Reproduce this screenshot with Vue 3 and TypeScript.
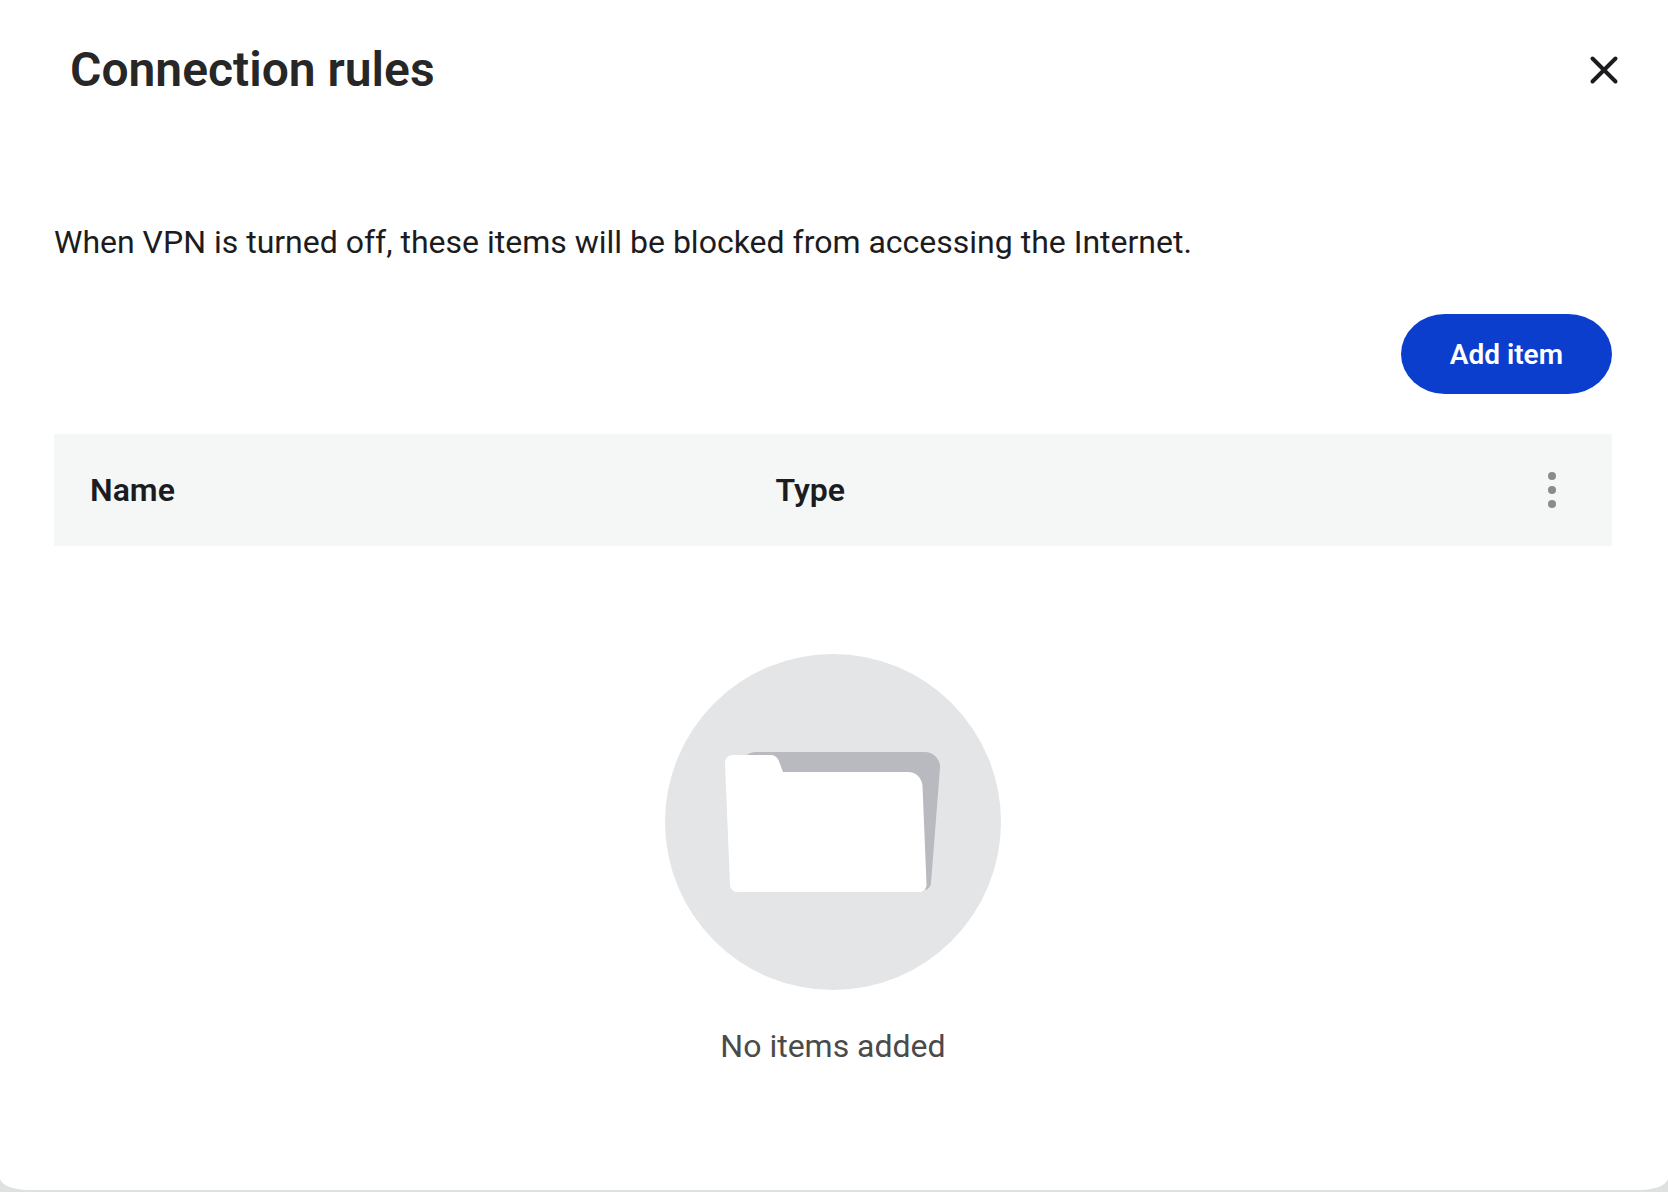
<script setup lang="ts">
import { ref } from 'vue'

interface RuleItem {
  name: string
  type: string
}

const items = ref<RuleItem[]>([])
</script>

<template>
  <div class="backdrop">
    <main class="dialog">
      <header class="header">
        <h1 class="title">Connection rules</h1>
        <button class="icon-button" type="button" aria-label="Close">
          <svg width="32" height="32" viewBox="0 0 32 32" fill="none" stroke="#1c1c20" stroke-width="4" stroke-linecap="round">
            <path d="M4.500 4.500 27.500 27.500M27.500 4.500 4.500 27.500" />
          </svg>
        </button>
      </header>

      <section class="content">
        <p class="description">When VPN is turned off, these items will be blocked from accessing the Internet.</p>

        <div class="actions">
          <button class="add-button" type="button">Add item</button>
        </div>

        <table class="rules">
          <thead>
            <tr>
              <th class="col-name" scope="col">Name</th>
              <th scope="col">Type</th>
              <th class="col-menu" scope="col">
                <button class="icon-button" type="button" aria-label="More options">
                  <svg width="40" height="40" viewBox="0 0 40 40" fill="#8a8b8c">
                    <circle cx="20" cy="6" r="4" />
                    <circle cx="20" cy="20" r="4" />
                    <circle cx="20" cy="34" r="4" />
                  </svg>
                </button>
              </th>
            </tr>
          </thead>
          <tbody>
            <tr v-for="item in items" :key="item.name">
              <td>{{ item.name }}</td>
              <td>{{ item.type }}</td>
              <td></td>
            </tr>
          </tbody>
        </table>

        <div v-if="items.length === 0" class="empty">
          <svg class="empty-art" width="336" height="336" viewBox="0 0 336 336" aria-hidden="true">
            <circle cx="168" cy="168" r="168" fill="#e4e5e7" />
            <path
              fill="#b9bac0"
              d="M91 98H260C268.500 98 275.500 105 275 114L266 229C265.600 233 263 236 259 236H100C96 236 93 233 92.500 229L76 114C75.500 105 82 98 91 98Z"
            />
            <path
              fill="#fff"
              d="M68 101H106C109.500 101 112 103 113.500 106L118 118H243C251 118 257 124 257.500 132L261.500 230C261.700 234.500 258.500 238 254 238H72.500C68.500 238 65.200 235 65 231L60 109C59.800 104.500 63.500 101 68 101Z"
            />
          </svg>
          <p class="empty-text">No items added</p>
        </div>
      </section>
    </main>
  </div>
</template>

<style>
body {
  margin: 0;
}
</style>

<style scoped>
.backdrop {
  display: flex;
  box-sizing: border-box;
  min-height: 100vh;
  background: #dfe0e0;
  font-family: Roboto, "Liberation Sans", sans-serif;
  color: #1c1c20;
}

.dialog {
  flex: 1;
  box-sizing: border-box;
  margin-bottom: 2px;
  padding-bottom: 40px;
  background: #fff;
  border-radius: 0 0 28px 28px / 0 0 12px 12px;
}

.header {
  display: flex;
  align-items: center;
  justify-content: space-between;
  height: 140px;
  padding: 0 48px 0 70px;
}

.title {
  margin: 0;
  font-size: 48px;
  line-height: 56px;
  font-weight: 600;
  color: #272727;
}

.icon-button {
  display: inline-flex;
  padding: 0;
  border: 0;
  background: none;
  cursor: pointer;
}

.content {
  padding: 80px 56px 0 54px;
}

.description {
  margin: 0;
  font-size: 32px;
  line-height: 44px;
}

.actions {
  display: flex;
  justify-content: flex-end;
  padding: 50px 0 40px;
}

.add-button {
  height: 80px;
  padding: 2px 49px 0;
  border: 0;
  border-radius: 44px / 40px;
  background: #0b3ecc;
  color: #fff;
  font-family: inherit;
  font-size: 28px;
  line-height: 40px;
  font-weight: 600;
  cursor: pointer;
}

.rules {
  width: 100%;
  table-layout: fixed;
  border-collapse: collapse;
}

.rules th {
  box-sizing: border-box;
  height: 112px;
  padding: 0 36px;
  background: #f5f7f7;
  font-size: 32px;
  line-height: 44px;
  font-weight: 600;
  text-align: left;
  vertical-align: middle;
}

.rules td {
  padding: 24px 36px;
  font-size: 32px;
  line-height: 44px;
}

.rules .col-name {
  width: 44%;
}

.rules .col-menu {
  width: 120px;
  padding: 0 40px;
}

.rules .icon-button {
  display: flex;
}

.empty {
  display: flex;
  flex-direction: column;
  align-items: center;
  gap: 34px;
  padding-top: 108px;
}

.empty-text {
  margin: 0;
  font-size: 32px;
  line-height: 44px;
  color: #4a4a4a;
}
</style>
